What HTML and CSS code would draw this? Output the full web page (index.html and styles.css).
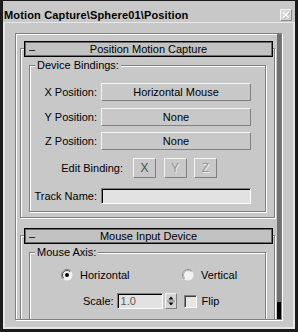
FILE: index.html
```html
<!DOCTYPE html>
<html>
<head>
<meta charset="utf-8">
<link rel="stylesheet" href="styles.css">
</head>
<body>
<div class="win">
  <div class="titlebar">
    <span class="title">Motion Capture\Sphere01\Position</span>
    <span class="close">
      <svg width="10" height="10" viewBox="0 0 10 10">
        <path d="M2.5 2.5L8.5 8.5M8.5 2.5L2.5 8.5" stroke="#9a9a9a" stroke-width="1.6"/>
        <path d="M2 2L8 8M8 2L2 8" stroke="#ffffff" stroke-width="1.6"/>
      </svg>
    </span>
  </div>
  <div class="client">
    <div class="panel">
      <div class="rollouts">
        <div class="rollout">
          <div class="rhead"><span class="minus">–</span><span class="rtitle">Position Motion Capture</span><span></span></div>
          <div class="group">
            <span class="glabel">Device Bindings:</span>
            <div class="rows">
              <div class="row"><span class="lbl">X Position:</span><span class="btn">Horizontal Mouse</span></div>
              <div class="row"><span class="lbl">Y Position:</span><span class="btn">None</span></div>
              <div class="row"><span class="lbl">Z Position:</span><span class="btn">None</span></div>
            </div>
            <div class="editrow">
              <span class="elbl">Edit Binding:</span>
              <span class="xbtn">X</span>
              <span class="xbtn off">Y</span>
              <span class="xbtn off">Z</span>
            </div>
            <div class="trackrow">
              <span class="lbl">Track Name:</span><span class="field"></span>
            </div>
          </div>
        </div>
        <div class="rollout second">
          <div class="rhead"><span class="minus">–</span><span class="rtitle">Mouse Input Device</span><span></span></div>
          <div class="group tall">
            <span class="glabel">Mouse Axis:</span>
            <div class="radios">
              <span class="opt">
                <svg class="radio" width="12" height="12" viewBox="0 0 12 12">
                  <circle cx="6" cy="6" r="5.5" fill="#f2f2f2"/>
                  <path d="M2.1 9.9A5.5 5.5 0 0 1 9.9 2.1" fill="none" stroke="#808080"/>
                  <path d="M2.8 9.2A4.5 4.5 0 0 1 9.2 2.8" fill="none" stroke="#505050"/>
                  <circle cx="6" cy="6" r="2" fill="#000"/>
                </svg>
                <span>Horizontal</span>
              </span>
              <span class="opt">
                <svg class="radio" width="12" height="12" viewBox="0 0 12 12">
                  <circle cx="6" cy="6" r="5.5" fill="#f2f2f2"/>
                  <path d="M2.1 9.9A5.5 5.5 0 0 1 9.9 2.1" fill="none" stroke="#909090"/>
                  <path d="M2.8 9.2A4.5 4.5 0 0 1 9.2 2.8" fill="none" stroke="#b0b0b0"/>
                </svg>
                <span>Vertical</span>
              </span>
            </div>
            <div class="scalerow">
              <span class="slbl">Scale:</span>
              <span class="sfield">1.0</span>
              <span class="spin">
                <svg width="10" height="14" viewBox="0 0 10 14">
                  <path d="M5 2.5L7.5 5.5H2.5Z" fill="#000"/>
                  <path d="M1 7H9" stroke="#808080"/>
                  <path d="M5 11.5L7.5 8.5H2.5Z" fill="#000"/>
                </svg>
              </span>
              <span class="check"></span>
              <span class="flip">Flip</span>
            </div>
          </div>
        </div>
      </div>
      <div class="sbar"><div class="thumb"></div></div>
    </div>
  </div>
</div>
</body>
</html>
```
FILE: styles.css
```css
* { box-sizing: border-box; }
html, body { margin: 0; padding: 0; }
body {
  background: #c8c8c8;
  font-family: "Liberation Sans", Arial, sans-serif;
  font-size: 11px;
  color: #000;
}
.win {
  width: 298px;
  height: 332px;
  display: flex;
  flex-direction: column;
  background: #c8c8c8;
  border-style: solid;
  border-color: #1c1c1c;
  border-width: 1px 3px 3px 3px;
  overflow: hidden;
}
.titlebar {
  height: 21px;
  flex: none;
  display: flex;
  align-items: flex-start;
  padding: 8px 3px 0 1px;
}
.title {
  font-weight: bold;
  line-height: 13px;
  letter-spacing: 0.15px;
  white-space: nowrap;
}
.close {
  margin-left: auto;
  width: 12px;
  height: 12px;
  background: #d6d6d6;
  border: 1px solid;
  border-color: #f4f4f4 #8a8a8a #8a8a8a #f4f4f4;
  display: flex;
}
.client {
  flex: 1;
  border-style: solid;
  border-color: #e6e6e6;
  border-width: 1px 2px 2px 2px;
  padding: 10px 0 0 10px;
}
.panel {
  width: 267px;
  height: 287px;
  border: 1px solid #808080;
  box-shadow: inset 1px 1px #fff, 1px 1px #fff;
  display: flex;
  overflow: hidden;
  padding-left: 4px;
}
.rollouts {
  width: 255px;
  padding-top: 14px;
  flex: none;
}
.rollout {
  border: 1px solid #808080;
  box-shadow: inset 1px 1px #fff, 1px 1px #fff;
}
.rollout.second { margin-top: 17px; }
.rhead {
  position: relative;
  margin: -8px 1px 0 3px;
  height: 16px;
  background: #c2c2c2;
  border: 1px solid #000;
  box-shadow: inset 0 0 0 1px #6a6a6a;
  display: grid;
  grid-template-columns: 1fr auto 1fr;
  align-items: center;
  line-height: 13px;
}
.minus { padding-left: 4px; }
.rtitle { white-space: nowrap; }
.group {
  margin: 8px 8px 5px 8px;
  border: 1px solid #808080;
  box-shadow: inset 1px 1px #fff, 1px 1px #fff;
  padding-bottom: 7px;
}
.group.tall { padding-bottom: 40px; }
.glabel {
  display: block;
  width: fit-content;
  margin: -7px 0 0 5px;
  padding: 0 2px;
  line-height: 13px;
  background: #c8c8c8;
}
.rows {
  display: flex;
  flex-direction: column;
  gap: 6.5px;
  margin-top: 11px;
}
.row, .trackrow {
  display: flex;
  align-items: center;
  gap: 4px;
}
.lbl {
  width: 67px;
  text-align: right;
  white-space: nowrap;
}
.btn {
  width: 150px;
  height: 18px;
  background: #c8c8c8;
  border: 1px solid;
  border-color: #f4f4f4 #808080 #808080 #f4f4f4;
  display: flex;
  align-items: center;
  justify-content: center;
  line-height: 14px;
}
.editrow {
  display: flex;
  align-items: center;
  margin-top: 8px;
  gap: 7.5px;
}
.elbl {
  width: 93px;
  text-align: right;
  margin-right: 2.5px;
  white-space: nowrap;
}
.xbtn {
  width: 23px;
  height: 20px;
  border: 1px solid;
  border-color: #f4f4f4 #808080 #808080 #f4f4f4;
  display: flex;
  align-items: center;
  justify-content: center;
  font-size: 12px;
  color: #505050;
}
.xbtn.off {
  color: #949494;
  text-shadow: 1px 1px #ececec;
}
.trackrow { margin-top: 10px; }
.field {
  width: 150px;
  height: 16px;
  background: #e2e2e2;
  border: 1px solid;
  border-color: #808080 #fff #fff #808080;
  box-shadow: inset 1px 1px #000;
}
.radios {
  display: grid;
  grid-template-columns: 121px auto;
  margin-top: 9px;
  padding-left: 31px;
  height: 14px;
  align-items: center;
}
.opt {
  display: flex;
  align-items: center;
  gap: 7px;
}
.radio { flex: none; }
.scalerow {
  display: flex;
  align-items: center;
  margin-top: 11px;
  padding-left: 53px;
  height: 16px;
}
.slbl { margin-right: 3px; }
.sfield {
  width: 46px;
  height: 16px;
  background: #e2e2e2;
  border: 1px solid;
  border-color: #808080 #fff #fff #808080;
  box-shadow: inset 1px 1px #000;
  padding-left: 3px;
  line-height: 14px;
  color: #5a5a5a;
}
.spin {
  width: 12px;
  height: 16px;
  margin-left: 2px;
  background: #d4d4d4;
  border: 1px solid;
  border-color: #f4f4f4 #808080 #808080 #f4f4f4;
  display: flex;
}
.check {
  width: 13px;
  height: 13px;
  margin-left: 7px;
  background: #e6e6e6;
  border: 1px solid;
  border-color: #808080 #fff #fff #808080;
  box-shadow: inset 1px 1px #404040;
}
.flip { margin-left: 5px; }
.sbar {
  width: 4px;
  margin-left: 2px;
  background: #707070;
  display: flex;
  flex-direction: column;
}
.thumb {
  margin-top: auto;
  height: 17px;
  background: #000;
}
```
